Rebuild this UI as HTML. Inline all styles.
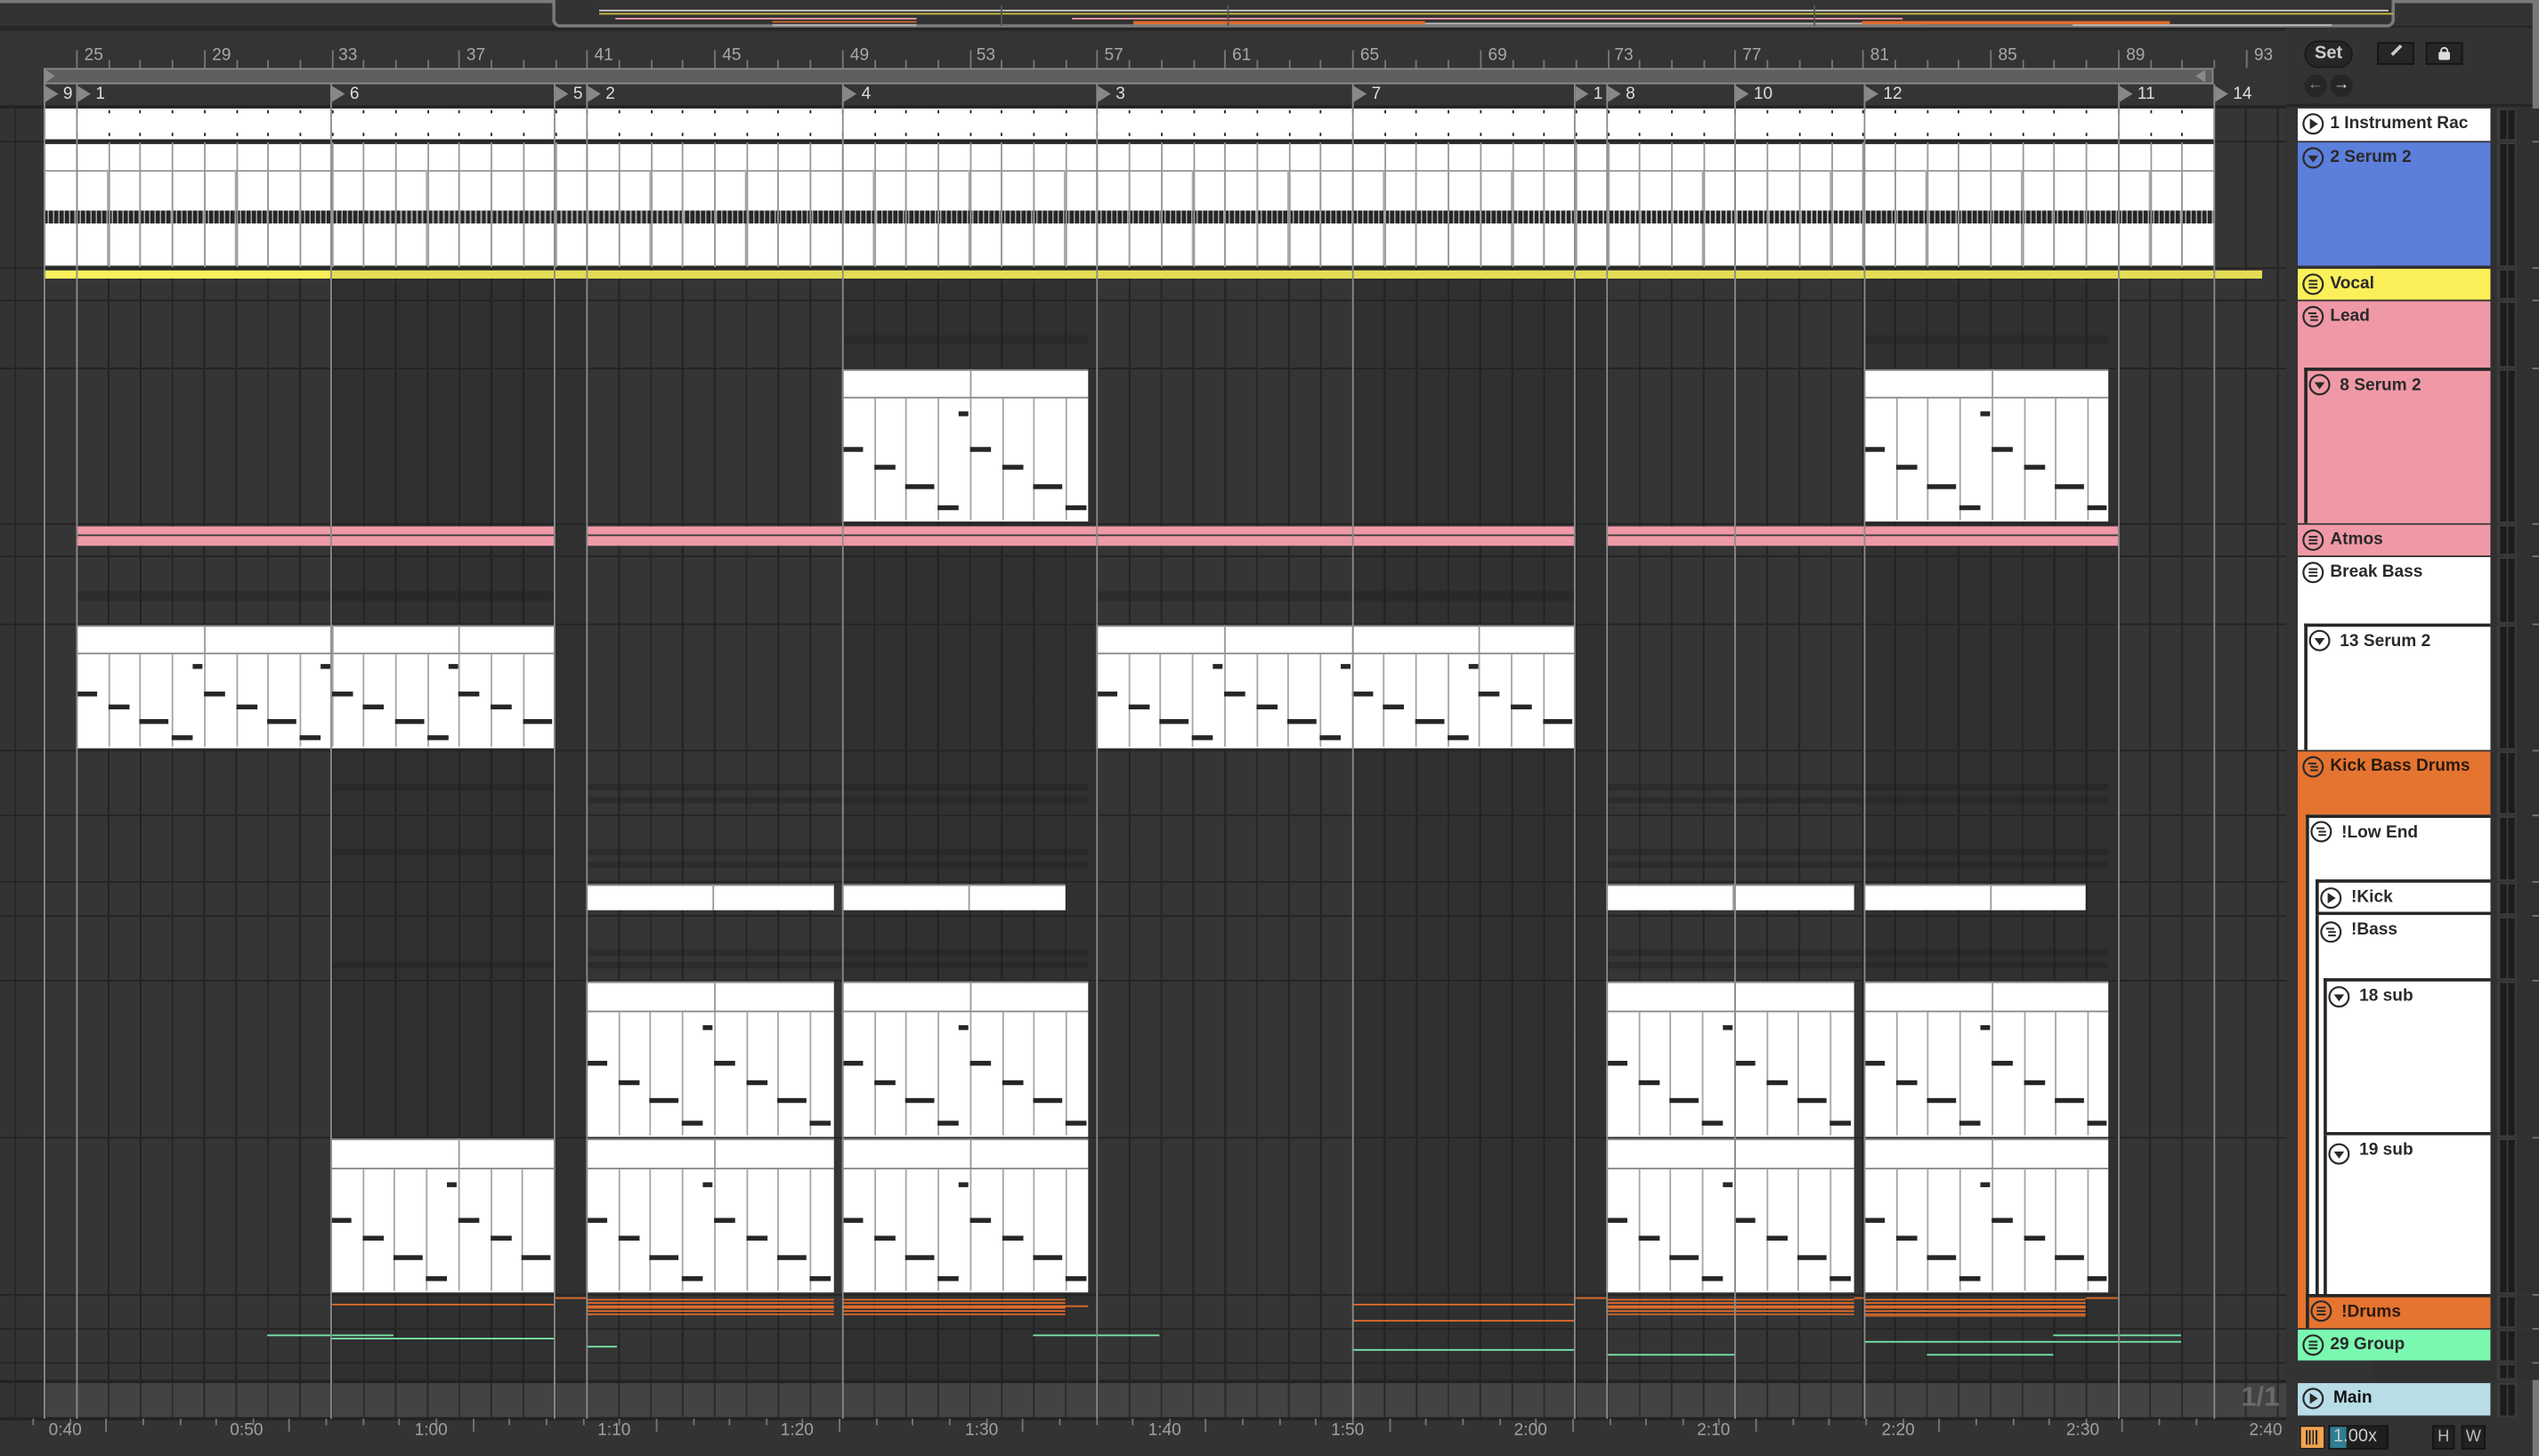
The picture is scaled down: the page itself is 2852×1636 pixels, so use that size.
<!DOCTYPE html>
<html><head><meta charset="utf-8"><style>
*{margin:0;padding:0;box-sizing:border-box}
html,body{width:2852px;height:1636px;overflow:hidden;background:#343434}
#s{position:absolute;left:0;top:0;width:1568px;height:899px;transform:scale(1.81888,1.81980);transform-origin:0 0;background:#343434;font-family:"Liberation Sans",sans-serif;overflow:hidden}
.a{position:absolute}
.rl{position:absolute;top:28px;font-size:10.5px;color:#a8a8a8}
.tl{position:absolute;top:877px;font-size:10.5px;color:#a0a0a0}
.sm{position:absolute;top:52px;height:13px;font-size:10.5px;color:#ddd;padding-left:11px;line-height:13px}
.sm:before{content:"";position:absolute;left:0;top:1px;border-left:8px solid #888;border-top:5.5px solid transparent;border-bottom:5.5px solid transparent}
.h{position:absolute;font-size:10.5px;font-weight:bold;color:#2a2a2a;line-height:18px;padding-left:20px;white-space:nowrap;overflow:hidden}
.h svg{position:absolute;left:3px;top:3px}
.m{position:absolute;left:1542px;width:12px;background:#3c3c3c}
.m:before,.m:after{content:"";position:absolute;top:1px;bottom:1px;width:4px;background:#1c1c1c;border-top:2px solid #1c1c1c}
.m:before{left:2px}.m:after{left:7px}
.oo{position:absolute;left:1384px;top:853px;font-size:17px;font-weight:bold;color:#6a6a6a}
</style></head><body><div id="s">
<div class="a" style="left:0;top:0;width:1568px;height:2px;background:#7a7a7a"></div>
<div class="a" style="left:0;top:2px;width:1568px;height:16px;background:#333"></div>
<div class="a" style="left:0;top:16px;width:1568px;height:3px;background:#262626"></div>
<div class="a" style="left:341px;top:0;width:1138px;height:17px;border:2px solid #7a7a7a;border-top:none;border-radius:0 0 5px 5px;background:#333"></div>
<div class="a" style="left:27px;top:42px;width:1340px;height:10px;background:#5f5f5f;border:1px solid #8a8a8a"></div>
<div class="a" style="left:28px;top:43px;border-left:6px solid #8a8a8a;border-top:4px solid transparent;border-bottom:4px solid transparent"></div>
<div class="a" style="left:1356px;top:43px;border-right:6px solid #8a8a8a;border-top:4px solid transparent;border-bottom:4px solid transparent"></div>
<span class="rl" style="left:52px">25</span><span class="rl" style="left:131px">29</span><span class="rl" style="left:209px">33</span><span class="rl" style="left:288px">37</span><span class="rl" style="left:367px">41</span><span class="rl" style="left:446px">45</span><span class="rl" style="left:525px">49</span><span class="rl" style="left:603px">53</span><span class="rl" style="left:682px">57</span><span class="rl" style="left:761px">61</span><span class="rl" style="left:840px">65</span><span class="rl" style="left:919px">69</span><span class="rl" style="left:997px">73</span><span class="rl" style="left:1076px">77</span><span class="rl" style="left:1155px">81</span><span class="rl" style="left:1234px">85</span><span class="rl" style="left:1313px">89</span><span class="rl" style="left:1392px">93</span>
<div class="sm" style="left:28px;width:19px;overflow:hidden">9</div><div class="sm" style="left:48px">1</div><div class="sm" style="left:205px">6</div><div class="sm" style="left:343px;width:19px;overflow:hidden">5</div><div class="sm" style="left:363px">2</div><div class="sm" style="left:521px">4</div><div class="sm" style="left:678px">3</div><div class="sm" style="left:836px">7</div><div class="sm" style="left:973px;width:19px;overflow:hidden">1</div><div class="sm" style="left:993px">8</div><div class="sm" style="left:1072px">10</div><div class="sm" style="left:1152px">12</div><div class="sm" style="left:1309px">11</div><div class="sm" style="left:1368px">14</div>
<div class="oo">1/1</div>
<div class="a" style="left:0;top:876px;width:1418px;height:23px;background:#333"></div>
<span class="tl" style="left:30px">0:40</span><span class="tl" style="left:142px">0:50</span><span class="tl" style="left:256px">1:00</span><span class="tl" style="left:369px">1:10</span><span class="tl" style="left:482px">1:20</span><span class="tl" style="left:596px">1:30</span><span class="tl" style="left:709px">1:40</span><span class="tl" style="left:822px">1:50</span><span class="tl" style="left:935px">2:00</span><span class="tl" style="left:1048px">2:10</span><span class="tl" style="left:1162px">2:20</span><span class="tl" style="left:1276px">2:30</span><span class="tl" style="left:1389px">2:40</span>
<div class="a" style="left:1412px;top:17px;width:156px;height:882px;background:#333"></div>
<div class="a" style="left:1564px;top:0;width:4px;height:899px;background:#777"></div>
<div class="a" style="left:1423px;top:25px;width:30px;height:17px;border-radius:9px;background:#262626;border:1px solid #1a1a1a;color:#ccc;font-size:11px;font-weight:bold;text-align:center;line-height:15px">Set</div>
<div class="a" style="left:1468px;top:26px;width:23px;height:14px;background:#262626;border:1px solid #151515"></div>
<div class="a" style="left:1476px;top:30px;width:8px;height:2px;background:#ccc;transform:rotate(-45deg)"></div>
<div class="a" style="left:1498px;top:26px;width:23px;height:14px;background:#262626;border:1px solid #151515"></div>
<div class="a" style="left:1506px;top:32px;width:7px;height:5px;background:#ddd;border-radius:1px"></div>
<div class="a" style="left:1507px;top:29px;width:5px;height:5px;border:1.3px solid #ddd;border-radius:3px 3px 0 0"></div>
<div class="a" style="left:1423px;top:46px;width:14px;height:14px;border-radius:7px;background:#262626;color:#888;font-size:10px;text-align:center;line-height:14px;font-weight:bold">←</div>
<div class="a" style="left:1439px;top:46px;width:14px;height:14px;border-radius:7px;background:#262626;color:#ddd;font-size:10px;text-align:center;line-height:14px;font-weight:bold">→</div>
<div class="a" style="left:1412px;top:64px;width:152px;height:2px;background:#262626"></div>
<div class="h" style="left:1419px;top:67px;width:119px;height:20px;background:#fff">1 Instrument Rac</div>
<div class="h" style="left:1419px;top:88px;width:119px;height:76px;background:#5c7fdc">2 Serum 2</div>
<div class="h" style="left:1419px;top:166px;width:119px;height:19px;background:#fbf05a">Vocal</div>
<div class="h" style="left:1419px;top:186px;width:119px;height:137px;background:#ef99a6">Lead</div>
<div class="h" style="left:1423px;top:227px;width:115px;height:96px;background:#ef99a6;border-top:2px solid #262626;border-left:2px solid #262626">8 Serum 2</div>
<div class="h" style="left:1419px;top:324px;width:119px;height:19px;background:#ef99a6">Atmos</div>
<div class="h" style="left:1419px;top:344px;width:119px;height:119px;background:#fff">Break Bass</div>
<div class="h" style="left:1423px;top:385px;width:115px;height:78px;background:#fff;border-top:2px solid #262626;border-left:2px solid #262626">13 Serum 2</div>
<div class="h" style="left:1419px;top:464px;width:119px;height:356px;background:#e57430;color:#2a1a10">Kick Bass Drums</div>
<div class="h" style="left:1424px;top:503px;width:114px;height:296px;background:#fff;border-top:2px solid #262626;border-left:2px solid #262626">!Low End</div>
<div class="h" style="left:1430px;top:543px;width:108px;height:22px;background:#fff;border-top:2px solid #262626;border-left:2px solid #262626;border-bottom:2px solid #262626">!Kick</div>
<div class="h" style="left:1430px;top:565px;width:108px;height:234px;background:#fff;border-left:2px solid #262626">!Bass</div>
<div class="h" style="left:1435px;top:604px;width:103px;height:97px;background:#fff;border-top:2px solid #262626;border-left:2px solid #262626;border-bottom:2px solid #262626">18 sub</div>
<div class="h" style="left:1435px;top:701px;width:103px;height:98px;background:#fff;border-left:2px solid #262626">19 sub</div>
<div class="h" style="left:1424px;top:799px;width:114px;height:21px;background:#e57430;border-top:2px solid #262626;border-left:2px solid #262626;color:#2a1a10">!Drums</div>
<div class="h" style="left:1419px;top:821px;width:119px;height:19px;background:#7bf8b0">29 Group</div>
<div class="h" style="left:1419px;top:854px;width:119px;height:20px;background:#b8dde7;color:#111;padding-left:22px">Main</div>
<div class="a" style="left:1420px;top:880px;width:16px;height:15px;background:#f2a450;border:1px solid #1c1c1c"></div>
<div class="a" style="left:1424px;top:883px;width:8px;height:9px;background:repeating-linear-gradient(to right,#222 0 1px,transparent 1px 2px)"></div>
<div class="a" style="left:1438px;top:880px;width:37px;height:15px;background:#1e1e1e;border:1px solid #151515"></div>
<div class="a" style="left:1439px;top:881px;width:10px;height:13px;background:#2e7f94"></div>
<div class="a" style="left:1441px;top:880px;font-size:11px;color:#ccc;line-height:15px">1.00x</div>
<div class="a" style="left:1502px;top:880px;width:14px;height:15px;background:#222;border:1px solid #151515;color:#bbb;font-size:10px;text-align:center;line-height:13px">H</div>
<div class="a" style="left:1520px;top:880px;width:15px;height:15px;background:#222;border:1px solid #151515;color:#bbb;font-size:10px;text-align:center;line-height:13px">W</div>
</div>
<script>
var S=document.getElementById('s');
function d(x,y,w,h,bg,ex){var e=document.createElement('div');e.className='a';e.style.cssText='left:'+x+'px;top:'+y+'px;width:'+w+'px;height:'+h+'px;background:'+bg+';'+(ex||'');S.appendChild(e);return e;}
var B=19.7;
var rows=[[67,87],[88,165],[166,185],[186,227],[228,323],[324,343],[344,385],[386,463],[464,503],[504,544],[545,565],[566,605],[606,702],[703,799],[800,820],[821,841],[842,852],[854,875]];
d(0,65,1412,812,'#232323');
rows.forEach(function(r,i){
 var bg=i==17?'#434343':'#353535';
 d(0,r[0],1412,r[1]-r[0],bg);
 if(i!=17){for(var k=0;k<9;k++){var x=47+k*157.6*2+157.6;d(x,r[0],157.6,r[1]-r[0],'#303030');}}
 d(27,r[0],1385,r[1]-r[0],'repeating-linear-gradient(to right,rgba(20,20,20,.55) 0 1px,transparent 1px 19.7px)','background-position:0.2px 0');
 d(0,r[0],27,r[1]-r[0],'#333');d(9,r[0],1,r[1]-r[0],'#262626');
 var m=document.createElement('div');m.className='m';m.style.top=r[0]+'px';m.style.height=(r[1]-r[0])+'px';S.appendChild(m);
});
for(var k=0;k<72;k++){var x=47+k*B;if(x>1400)break;d(x,k%4==0?31:37,1,k%4==0?11:5,'#777');}
for(var k=0;k<60;k++){var x=20+k*22.64;if(x>1410)break;d(x,876,1,k%5==2?8:4,'#777');}
function dim(y,h,segs){segs.forEach(function(s){d(s[0],y,s[1]-s[0],h,'rgba(30,30,30,.35)');});}
dim(207,5,[[520,672],[1151,1302]]);
dim(365,6,[[47,342],[677,972]]);
dim(484,4,[[204,342],[362,672],[992,1302]]);dim(492,4,[[362,672],[992,1302]]);
dim(524,4,[[204,342],[362,672],[992,1302]]);dim(532,4,[[362,672],[992,1302]]);
dim(586,4,[[362,672],[992,1302]]);dim(594,4,[[204,342],[362,672],[992,1302]]);
function notes(x1,x2,top,h){
 var lv=[0.4,0.55,0.7,0.88];
 for(var k=0;;k++){var bx=x1+k*B;if(bx>=x2-1)break;
  if(k>0)d(bx,top,1,h,'#a6a6a6');
  var q=k%4;var w=q==2?18:13;
  d(bx,top+h*lv[q],Math.min(w,x2-bx-1),3,'#262626');
  if(q==3&&bx+B<=x2)d(bx+13,top+h*0.1,6,3,'#262626');
 }
}
function midi(x1,x2,y1,y2,hh){
 d(x1,y1,x2-x1,y2-y1,'#fff','border-top:1px solid #888;border-left:1px solid #999');
 d(x1,y1+hh,x2-x1,1,'#888');
 for(var k=4;k*B<x2-x1;k+=4)d(x1+k*B,y1,1,hh,'#999');
 notes(x1,x2,y1+hh+1,y2-y1-hh-2);
}
d(27,67,1340,20,'#fff');
for(var k=0;k<68;k++){var x=27+k*B+20;if(x>1366)break;d(x,68,1,2,'#222');d(x,82,1,2,'#222');}
d(27,86,1340,2,'#262626');
for(var k=0;k<68;k++){var x=27+k*B+20;if(x>1366)break;d(x,89,1,2,'#222');}
d(27,89,1340,75,'#fff');
d(27,105,1340,1,'#999');
for(var k=0;k<68;k++){var x=27+k*B;if(x>1366)break;d(x,105,1,59,'#aaa');}
d(27,130,1340,8,'repeating-linear-gradient(to right,#262626 0 2.4px,#aaa 2.4px 3.3px)');
for(var k=0;k<68;k++){var x=47+k*B;if(x>1366)break;d(x,88,1,77,'#999');}
d(27,167,1370,5,'#fbf05a');d(204,167,1193,5,'#e5dc55');
[[47,342],[362,972],[992,1308]].forEach(function(s){d(s[0],325,s[1]-s[0],12,'#ef99a6');d(s[0],330,s[1]-s[0],1,'#3a3a3a');});
midi(520,672,228,322,17);midi(1151,1302,228,322,17);
midi(47,342,386,462,17);midi(677,972,386,462,17);
[[362,515],[520,658],[992,1145],[1151,1288]].forEach(function(s){d(s[0],546,s[1]-s[0],16,'#fff','border-top:1px solid #888');d(s[0]+78,546,1,16,'#999');});
[[362,515],[520,672],[992,1145],[1151,1302]].forEach(function(s){midi(s[0],s[1],606,702,18);});
[[204,342],[362,515],[520,672],[992,1145],[1151,1302]].forEach(function(s){midi(s[0],s[1],703,798,18);});
function ln(x1,x2,y,c,h){d(x1,y,x2-x1,h||1.4,c);}
var O='#e06a2a';
ln(204,342,805,O);ln(342,362,801,O);ln(835,972,805,O);ln(835,972,815,O);ln(972,992,801,O);ln(1145,1151,801,O);ln(1288,1308,801,O);
[[362,515],[520,658],[992,1145],[1151,1288]].forEach(function(s){for(var j=0;j<5;j++)ln(s[0],s[1],802+j*2.2,O,1.3);});
ln(520,672,806,O);ln(992,1145,811,'#b86530');ln(1151,1288,812,'#b86530');
var G='#78e8a8';
ln(165,243,824,G);ln(204,342,826,G);ln(362,381,831,G);ln(638,716,824,G);ln(835,972,833,G);ln(992,1071,836,G);ln(1151,1347,828,G);ln(1190,1268,836,G);ln(1268,1347,824,G);
[27,47,204,342,362,520,677,835,972,992,1071,1151,1308,1367].forEach(function(x){d(x,52,1,824,'#8c8c8c');});
var ov=[[370,1475,6,'#ccc',1],[370,1478,8,'#c9bf40',1],[380,566,11,'#ef99a6',1],[662,1175,11,'#ef99a6',1],[477,566,15,'#bbb',1],[700,1190,14,'#bbb',1],[477,566,13,'#c86a30',1],[700,880,13,'#e06a2a',2],[1150,1340,13,'#e06a2a',2],[1280,1440,15,'#bbb',1]];
ov.forEach(function(o){d(o[0],o[2],o[1]-o[0],o[4]||1,o[3]);});
d(618,3,1,13,'#555');d(758,3,1,13,'#555');d(1120,3,1,13,'#555');
var icons=[[67,'p'],[88,'v'],[166,'l'],[186,'g'],[228,'v',4],[324,'l'],[344,'l'],[386,'v',4],[464,'g'],[504,'g',5],[545,'p',11],[566,'g',11],[606,'v',16],[703,'v',16],[800,'l',5],[821,'l'],[854,'p']];
icons.forEach(function(ic){var x=1421+(ic[2]||0),y=ic[0]+2;var c='#2a2a2a';
 var g='<svg class="a" style="left:'+x+'px;top:'+y+'px" width="15" height="15" viewBox="0 0 15 15"><circle cx="7.5" cy="7.5" r="6" fill="none" stroke="'+c+'" stroke-width="1.2"/>';
 if(ic[1]=='p')g+='<path d="M5.5 4.2L10.5 7.5L5.5 10.8Z" fill="'+c+'"/>';
 if(ic[1]=='v')g+='<path d="M4.3 6L10.7 6L7.5 10.3Z" fill="'+c+'"/>';
 if(ic[1]=='l')g+='<path d="M4.8 5.4H10.2M4.8 7.5H10.2M4.8 9.6H10.2" stroke="'+c+'" stroke-width="1.1"/>';
 if(ic[1]=='g')g+='<path d="M4.5 5.4H9.5M5.8 7.5H10.5M5.8 9.6H10.5" stroke="'+c+'" stroke-width="1.1"/>';
 g+='</svg>';var t=document.createElement('div');t.innerHTML=g;S.appendChild(t.firstChild);});
var st=[].slice.call(S.querySelectorAll('.h,.sm,.rl,.tl,.oo'));
st.forEach(function(e){S.appendChild(e);});
var sv=[].slice.call(S.querySelectorAll('svg'));sv.forEach(function(e){S.appendChild(e);});
</script>
</body></html>
